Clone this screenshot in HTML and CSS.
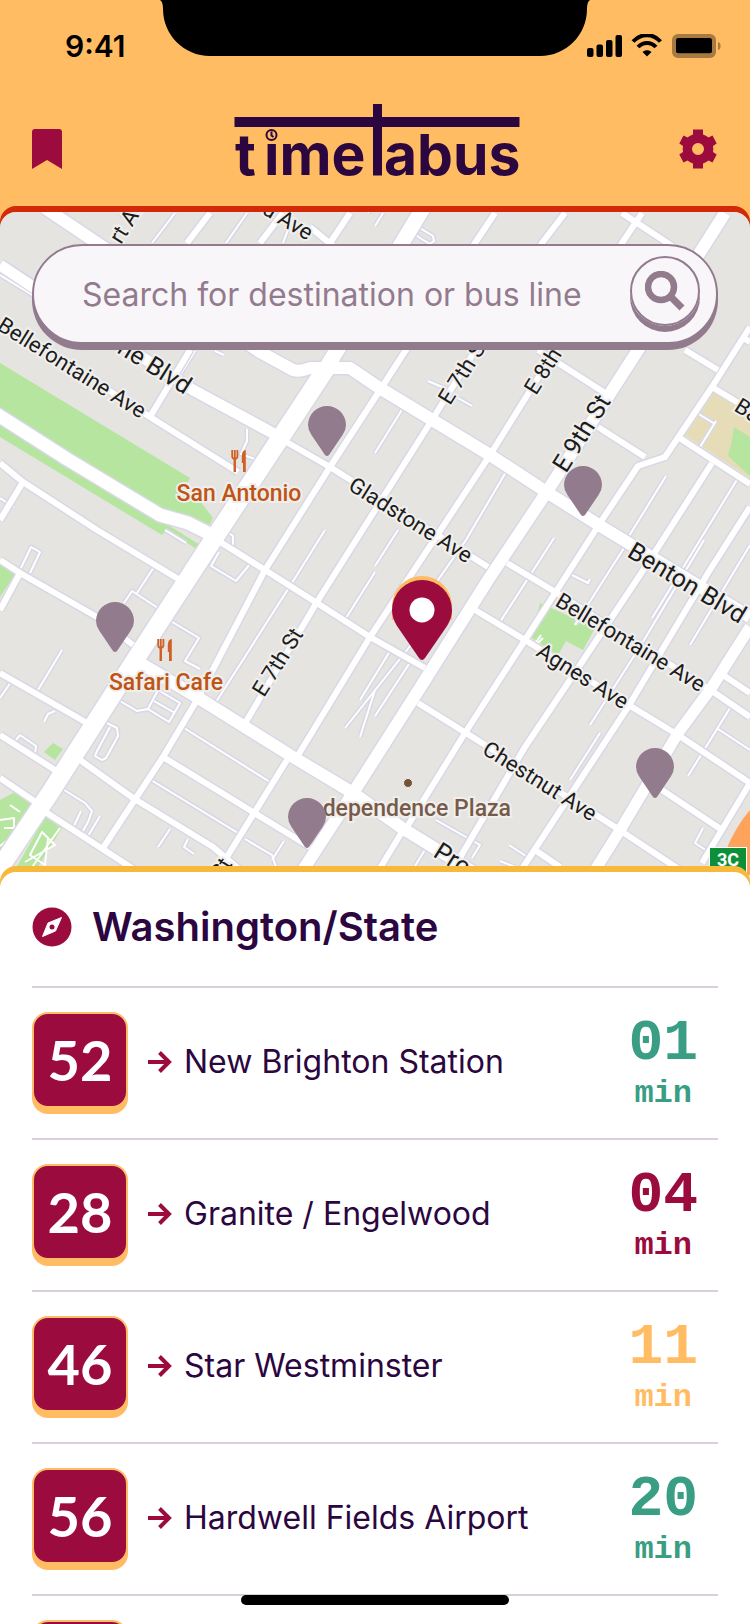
FILE: index.html
```
<!DOCTYPE html>
<html lang="en">
<head>
<meta charset="utf-8">
<meta name="viewport" content="width=device-width, initial-scale=1">
<title>timelabus</title>
<link rel="stylesheet" href="styles.css">
</head>
<body>
<div class="app">
  <header class="header">
    <div class="status">
      <span class="clock">9:41</span>
      <svg class="notch" width="430" height="56" viewBox="0 0 430 56" aria-hidden="true"><path d="M0 0C2 1 3 4 3 9C3 35 24 56 50 56H380C406 56 427 35 427 9C427 4 428 1 430 0Z"/></svg>
      <svg class="signals" width="134" height="24" viewBox="0 0 134 24" aria-label="Signal, wifi and battery">
        <rect x="0" y="14" width="6.500" height="9" rx="2"/><rect x="9.500" y="10.500" width="6.500" height="12.500" rx="2"/><rect x="19" y="6" width="6.500" height="17" rx="2"/><rect x="28.500" y="1" width="6.500" height="22" rx="2"/>
        <path d="M46 7.500C54-1 66-1 73.500 7.500" fill="none" stroke="#000" stroke-width="4"/>
        <path d="M51 13C56 7.500 64 7.500 69 13" fill="none" stroke="#000" stroke-width="4"/>
        <path d="M55.500 18C58 15.600 62 15.600 64.500 18L60 22.500Z"/>
        <rect x="87" y="2" width="40" height="20" rx="4" fill="none" stroke="#a67a40" stroke-width="4"/><rect x="89" y="4" width="36" height="15.500" rx="2"/><path d="M131 8C134.500 9 134.500 15 131 16Z" fill="#a67a40"/>
      </svg>
    </div>
    <div class="brandbar">
      <button class="iconbtn" type="button" aria-label="Saved stops"><svg width="30" height="40" viewBox="0 0 30 40"><path d="M3 0H27Q30 0 30 3V40L15 31L0 40V3Q0 0 3 0Z"/></svg></button>
      <svg class="logo" width="286" height="78" viewBox="232 102 286 78" role="img" aria-label="timelabus">
        <rect x="234.500" y="117" width="285" height="10"/>
        <text x="235 264" y="175">time</text>
        <rect x="373" y="104" width="9" height="71.500"/>
        <text x="384" y="175">abus</text>
        <rect class="logo-gap" x="263" y="127.500" width="16" height="14.500"/>
        <g class="logo-clock"><circle cx="271.500" cy="135" r="5"/><path d="M271.500 131.500V135.500L273.500 137"/></g>
      </svg>
      <button class="iconbtn" type="button" aria-label="Settings"><svg width="40" height="40" viewBox="-20 -20 40 40"><path fill-rule="evenodd" d="M-5-19.500H5V-14.500Q8-13.500 10.500-11.500L14.500-13.500L18.700-5.500L15-3Q15.600 0 15 3L18.700 5.500L14.500 13.500L10.500 11.500Q8 13.500 5 14.500V19.500H-5V14.500Q-8 13.500-10.500 11.500L-14.500 13.500L-18.700 5.500L-15 3Q-15.600 0-15-3L-18.700-5.500L-14.500-13.500L-10.500-11.500Q-8-13.500-5-14.500ZM0-6A6 6 0 1 0 0 6A6 6 0 1 0 0-6Z"/></svg></button>
    </div>
  </header>

  <main class="map">
    <svg class="mapart" viewBox="0 212 750 680" preserveAspectRatio="xMidYMin slice" role="img" aria-label="Map of nearby stops">
      <defs>
        <path id="pin" d="M-19 19A19 19 0 1 1 19 19Q19 24 15.500 29L2 49Q0 51-2 49L-15.500 29Q-19 24-19 19Z"/>
        <g id="meal"><path d="M1.200 0V6.500Q1.200 8.500 3.800 9V22M6.400 0V6.500Q6.400 8.500 3.800 9M3.800 0V8" fill="none" stroke="#cf6127" stroke-width="1.800"/><path d="M2.600 9H5V22H2.600ZM12 22V13H10.800V6Q11 0 14.800 0V22Z" fill="#cf6127"/></g>
        <g id="alleys">
          <path d="M175 213L152 243M247 213L226 243M290 224L283 243M383 213L375 226M375 200L368 213M120 213L124 217M62 213L67 215"/>
          <path d="M412 232L420 238L430 244L434 241L433 236L420 228M375 453L403 408M510 465L466 540L410 620M428 381L449 390M458 398L472 406M247 429V441L241 454L255 459M0 275L34 296M215 351L224 355M195 351L175 383M340 351L336 358"/>
          <path d="M325 530L290 586L216 702M375 572L346 618M398 530L375 566M666 476L629 536M738 478L700 540L652 618M704 540L641 645L590 725M554 538L500 622M568 573L588 583L590 579M629 540L575 625M750 545L690 645"/>
          <path d="M20 570L31 547L40 552L30 573M124 603L132 591L158 608M137 593L154 567M219 552L211 566L236 581L250 564M217 545L226 531L233 536V547M169 620L199 638L185 661L200 669M120 701L137 711L148 709L169 722L180 703L158 690L148 709M154 701L175 713M103 721L117 728L118 736L106 758L102 760L95 756L97 751L110 727"/>
          <path d="M62 650L38 690M44 722L48 714L55 711M15 741L20 735L36 746L35 753M11 682L0 698M61 788L85 803L92 811L88 822L80 836M81 811L73 828M100 816L88 836M184 728L270 782M151 780L238 833M170 829L158 847M188 839L184 847L194 854M245 839L272 855L277 870M284 841L272 860M415 640L345 728M375 690L360 737M390 651L360 700M409 664L375 716"/>
          <path d="M436 820L480 845L472 858M426 848L415 866M509 845L526 856M500 861L515 867M703 828L695 843L707 851M718 729L750 750M730 708L688 776M570 780L600 733M0 498L14 507M165 530L186 543"/>
          <path d="M697 413L715 424M716 421L700 447"/>
        </g>
        <g id="streets">
          <path d="M0 463L23 482L97 530L180 580M23 482L0 520M105 388L150 417L238 472M190 350L150 417"/>
          <path d="M217 540L265 570L317 603L370 637L425 668M283 440L330 467L488 567M507 563L552 590L715 693L750 717"/>
          <path d="M210 213L187 243M283 213L260 243M350 213L330 243M310 227L333 246"/>
          <path d="M495 213L475 243L382 387L330 467L265 570L197 700L163 757L103 848"/>
          <path d="M565 213L542 243L432 420L317 602L244 725M642 213L622 243L490 455L370 637L297 757"/>
          <path d="M622 213L672 246M538 350L605 393M598 427L645 457M685 350L718 370M712 387L750 410M742 337L750 342M678 437L750 484"/>
          <path d="M402 835L465 733L525 640L602 520L638 466L665 457L712 387L750 327"/>
          <path d="M455 866L525 747L572 677L648 563L712 463M520 872L628 707L708 573L750 507"/>
          <path d="M475 610L525 640L632 707L678 735L750 783L702 863M418 703L482 743L615 827L680 870M662 790L722 830M723 675L750 693M535 850L560 867"/>
          <path d="M0 673L87 723M0 735L55 770M0 778L40 805M80 760L133 798L213 847L240 870M163 757L253 812L310 847M47 813L135 870M287 760L220 868M0 610L20 573L97 617L133 645M0 560L20 573M402 832L380 868"/>
        </g>
        <g id="avenues">
          <path d="M0 265L33 287L193 390L278 436" stroke-width="11"/>
          <path d="M45 208L97 243L260 352L293 370Q300 372 310 368H350L378 387L490 455L548 493L602 527L750 617" stroke-width="12"/>
          <path d="M725 213L638 350L548 490L488 580L425 680L353 793L303 870" stroke-width="12"/>
          <path d="M140 663L197 697L293 757L353 793L402 828L475 873" stroke-width="12"/>
          <path d="M750 627L712 687L678 733L622 827L595 870" stroke-width="11"/>
          <path d="M-24 401L67 459L160 515L188 523L216 537" stroke-width="13"/>
        </g>
      </defs>
      <rect class="land" x="0" y="200" width="750" height="700"/>
      <path class="park" d="M0 363L190 478L187 484L213 518L208 528L160 513L67 455L0 415ZM0 423L160 520L200 545L195 548L167 530L162 535L0 437ZM0 564L15 574L0 597ZM44 752L53 743L63 749L55 760ZM0 800L15 792L36 803L15 840L0 862ZM45 817L62 828L36 870H15ZM540 603L595 628L583 650L566 641L558 655L532 638Z"/>
      <path class="yard" d="M711 391L750 415V478L727 463L683 434L697 412Z"/>
      <path class="park" d="M734 427L750 437V476L728 456L732 440Z"/>
      <path class="dunes" d="M750 810Q736 826 726 850L732 875H750Z"/>
      <use href="#alleys" class="casing-s"/><use href="#alleys" class="fill-s"/>
      <path class="paths" d="M30 870L60 828M25 862L55 845L42 832L30 855L45 865L48 838M0 820L14 818V828H4M10 805L20 812M8 840L0 846M534 645L541 635M536 645L543 638"/>
      <use href="#streets" class="casing-m"/>
      <g class="casing-l">
        <path d="M0 265L193 390L278 436" stroke-width="14"/>
        <path d="M45 208L97 243L260 352L293 370Q300 372 310 368H350L378 387L490 455L548 493L602 527L750 617" stroke-width="15"/>
        <path d="M725 213L638 350L548 490L488 580L425 680L353 793L303 870" stroke-width="15"/>
        <path d="M140 663L197 697L293 757L353 793L402 828L475 873" stroke-width="15"/>
        <path d="M750 627L712 687L678 733L622 827L595 870" stroke-width="14"/>
        <path d="M-24 401L67 459L160 515L188 523L216 537" stroke-width="16"/>
        <path d="M-5 875L50 793L133 663L213 540L327 367" stroke-width="21"/>
        <path d="M327 367L425 205" stroke-width="18"/>
      </g>
      <use href="#streets" class="fill-m"/>
      <use href="#avenues" class="fill-l"/>
      <path class="trunk" d="M-5 875L50 793L133 663L213 540L327 367"/>
      <path class="fill-l" d="M325 370L425 205" stroke-width="15"/>

      <g class="street">
        <text transform="translate(121 245) rotate(-58)">rt Ave</text>
        <text transform="translate(261 213) rotate(31)">d Ave</text>
        <text transform="translate(-4 329) rotate(32)">Bellefontaine Ave</text>
        <text transform="translate(450 406) rotate(-58)">E 7th St</text>
        <text transform="translate(536 396) rotate(-58)">E 8th St</text>
        <text transform="translate(264 698) rotate(-58)">E 7th St</text>
        <text transform="translate(347 489) rotate(32)">Gladstone Ave</text>
        <text transform="translate(554 605) rotate(31)">Bellefontaine Ave</text>
        <text transform="translate(535 655) rotate(32)">Agnes Ave</text>
        <text transform="translate(481 753) rotate(32)">Chestnut Ave</text>
        <text transform="translate(733 410) rotate(32)">Ba</text>
        <text transform="translate(222 881) rotate(-58)">St</text>
      </g>
      <g class="street street-big">
        <text transform="translate(116 352) rotate(32)">ne Blvd</text>
        <text transform="translate(566 474) rotate(-58)">E 9th St</text>
        <text transform="translate(626 556) rotate(31)">Benton Blvd</text>
        <text transform="translate(432 856) rotate(32)">Pro</text>
      </g>
      <g class="place">
        <text x="239" y="501" text-anchor="middle">San Antonio</text>
        <text x="166" y="690" text-anchor="middle">Safari Cafe</text>
        <text class="plaza" x="511" y="816" text-anchor="end">dependence Plaza</text>
      </g>
      <use href="#meal" x="231" y="450"/><use href="#meal" x="157" y="639"/>
      <circle cx="408" cy="783" r="4.500" fill="#735434" stroke="#f2f0ee"/>
      <rect x="709.500" y="847.500" width="37" height="28" fill="#0d8f3a" stroke="#fff"/>
      <text class="route" x="728" y="866" text-anchor="middle">3C</text>
      <g class="pins">
        <use href="#pin" x="327" y="406"/><use href="#pin" x="583" y="466"/><use href="#pin" x="115" y="602"/><use href="#pin" x="307" y="798"/><use href="#pin" x="655" y="748"/>
      </g>
      <path fill="#ffbc63" d="M392 606A30 30 0 0 1 452 606V620H392Z"/>
      <path fill="#9b0b3e" d="M392 610A30 30 0 0 1 452 610Q452 618 447 626L425 658Q422 662 419 658L397 626Q392 618 392 610Z"/>
      <circle cx="422" cy="610" r="12.500" fill="#fff"/>
    </svg>

    <form class="search" role="search">
      <input class="search-input" type="text" aria-label="Search for destination or bus line" placeholder="Search for destination or bus line">
      <button class="search-btn" type="button" aria-label="Search"><svg width="40" height="40" viewBox="0 0 40 40"><circle cx="16" cy="16" r="13" fill="none" stroke="currentColor" stroke-width="6.500"/><path d="M26 26L37 37" stroke="currentColor" stroke-width="7"/></svg></button>
    </form>
  </main>

  <section class="sheet">
    <h1 class="stop">
      <svg width="40" height="40" viewBox="-20 -20 40 40" aria-hidden="true"><circle r="19.500" fill="#9b0b3e"/><path d="M9.500-9.500L3.500 4L-9.500 9.500L-4-4Z" fill="#fff" stroke="#fff" stroke-linejoin="round"/><circle r="2.500" fill="#9b0b3e"/></svg>
      <span>Washington/State</span>
    </h1>
    <ul class="lines">
      <li><a class="line" href="#l52"><span class="badge">52</span><svg class="arrow" viewBox="0 0 24 22"><path d="M0 11H21M11.500 1.500L21 11L11.500 20.500"/></svg><span class="dest">New Brighton Station</span><span class="eta soon"><b>01</b><small>min</small></span></a></li>
      <li><a class="line" href="#l28"><span class="badge">28</span><svg class="arrow" viewBox="0 0 24 22"><path d="M0 11H21M11.500 1.500L21 11L11.500 20.500"/></svg><span class="dest">Granite / Engelwood</span><span class="eta late"><b>04</b><small>min</small></span></a></li>
      <li><a class="line" href="#l46"><span class="badge">46</span><svg class="arrow" viewBox="0 0 24 22"><path d="M0 11H21M11.500 1.500L21 11L11.500 20.500"/></svg><span class="dest">Star Westminster</span><span class="eta wait"><b>11</b><small>min</small></span></a></li>
      <li><a class="line" href="#l56"><span class="badge">56</span><svg class="arrow" viewBox="0 0 24 22"><path d="M0 11H21M11.500 1.500L21 11L11.500 20.500"/></svg><span class="dest">Hardwell Fields Airport</span><span class="eta soon"><b>20</b><small>min</small></span></a></li>
      <li aria-hidden="true"><div class="line"><span class="badge"></span></div></li>
    </ul>
  </section>
  <div class="home"></div>
</div>
</body>
</html>
```
FILE: styles.css
```
* { box-sizing: border-box; }
body { margin: 0; background: #ffbc63; font-family: Inter, "Liberation Sans", sans-serif; color: #2c073f; }
.app { position: relative; display: flex; flex-direction: column; height: 100vh; overflow: hidden; }
button { border: 0; background: none; padding: 0; font: inherit; cursor: pointer; }
svg { display: block; }

.header { flex: none; background: #ffbc63; }
.status { position: relative; display: flex; justify-content: space-between; align-items: center; height: 92px; padding: 0 29px 0 65px; }
.clock { color: #000; font-size: 30px; font-weight: 600; line-height: 36px; }
.notch { position: absolute; top: 0; left: 50%; transform: translateX(-50%); }
.brandbar { display: flex; justify-content: space-between; align-items: center; height: 120px; padding: 0 32px 6px; }
.iconbtn { display: flex; justify-content: center; width: 40px; fill: #9b0b3e; }
.iconbtn:first-child { justify-content: flex-start; }
.iconbtn:last-child { justify-content: flex-end; }
.logo { margin-bottom: 16px; overflow: visible; fill: #2c073f; font-size: 57px; font-weight: 700; }
.logo-gap { fill: #ffbc63; }
.logo-clock { fill: none; stroke: #2c073f; stroke-width: 2; }

.map { position: relative; flex: none; border-radius: 16px 16px 0 0; box-shadow: 0 -6px 0 #d22a09; }
.mapart { width: 100%; height: 680px; border-radius: 16px 16px 0 0; }
.land { fill: #e5e4e0; }
.park { fill: #b5e59e; }
.yard { fill: #e6ddb8; }
.dunes { fill: #ffa25c; }
.casing-s, .casing-m, .casing-l, .fill-s, .fill-m, .fill-l, .trunk, .paths { fill: none; stroke: #d8d8e6; stroke-linejoin: round; }
.casing-s { stroke-width: 5px; }
.casing-m { stroke-width: 9px; }
.fill-s { stroke: #fff; stroke-width: 2px; }
.fill-m { stroke: #fff; stroke-width: 6px; }
.fill-l, .trunk, .paths { stroke: #fff; }
.paths { stroke-width: 2px; }
.trunk { stroke-width: 18px; }
.street { fill: #1c1c1c; stroke: #f0efed; stroke-width: 4px; paint-order: stroke; font: 400 22px Roboto, sans-serif; }
.street-big { font-size: 25px; }
.place { fill: #bf5415; stroke: #f0efed; stroke-width: 4px; paint-order: stroke; font: 500 23px Roboto, sans-serif; }
.plaza { fill: #775b49; }
.route { fill: #fff; font: 700 18px Roboto, sans-serif; }
.pins { fill: #937b8e; }

.search { position: absolute; top: 32px; left: 32px; right: 32px; display: flex; align-items: center; height: 100px; padding: 0 16px 0 48px; border: 2px solid #937b8e; border-radius: 50px; background: #f9f6fa; box-shadow: 0 6px 0 #937b8e; }
.search-input { flex: 1; min-width: 0; border: 0; outline: 0; padding: 2px 0 0; background: none; color: #937b8e; font: 400 32px/40px Inter, sans-serif; }
.search-input::placeholder { color: #937b8e; opacity: 1; }
.search-btn { display: flex; justify-content: center; align-items: center; width: 70px; height: 70px; margin-bottom: 6px; border: 2px solid #937b8e; border-radius: 50%; color: #937b8e; box-shadow: 0 6px 0 #937b8e; }

.sheet { position: relative; flex: 1; min-height: 0; margin-top: -20px; padding: 0 32px; border-radius: 16px 16px 0 0; background: #fff; box-shadow: 0 -6px 0 #f7b93c; }
.stop { display: flex; align-items: center; gap: 20px; height: 114px; margin: 0; padding-bottom: 4px; font-size: 40px; line-height: 48px; font-weight: 600; }
.lines { margin: 0; padding: 0; list-style: none; }
.line { display: flex; align-items: center; height: 152px; padding: 0 20px 2px 0; border-top: 2px solid #d8cfda; color: inherit; text-decoration: none; }
.badge { flex: none; width: 96px; height: 96px; margin-bottom: 4px; border: 2px solid #ffbc63; border-radius: 16px; background: #9b0b3e; box-shadow: 0 6px 0 #ffbc63; color: #fff; font: 700 56px/92px Lato, sans-serif; text-align: center; }
.arrow { width: 24px; height: 22px; margin: 0 12px 0 20px; fill: none; stroke: #9b0b3e; stroke-width: 4px; }
.dest { flex: 1; font-size: 32px; line-height: 40px; font-weight: 400; }
.eta { display: flex; flex-direction: column; align-items: center; padding-top: 4px; font-family: "Liberation Mono", monospace; }
.eta b { font-size: 58px; line-height: 60px; font-weight: 700; }
.eta small { font-size: 32px; line-height: 40px; font-weight: 700; }
.soon { color: #3a9e85; }
.late { color: #9b0b3e; }
.wait { color: #ffbc63; }
.home { position: absolute; bottom: 19px; left: 50%; width: 268px; height: 10px; border-radius: 5px; background: #000; transform: translateX(-50%); }
```
